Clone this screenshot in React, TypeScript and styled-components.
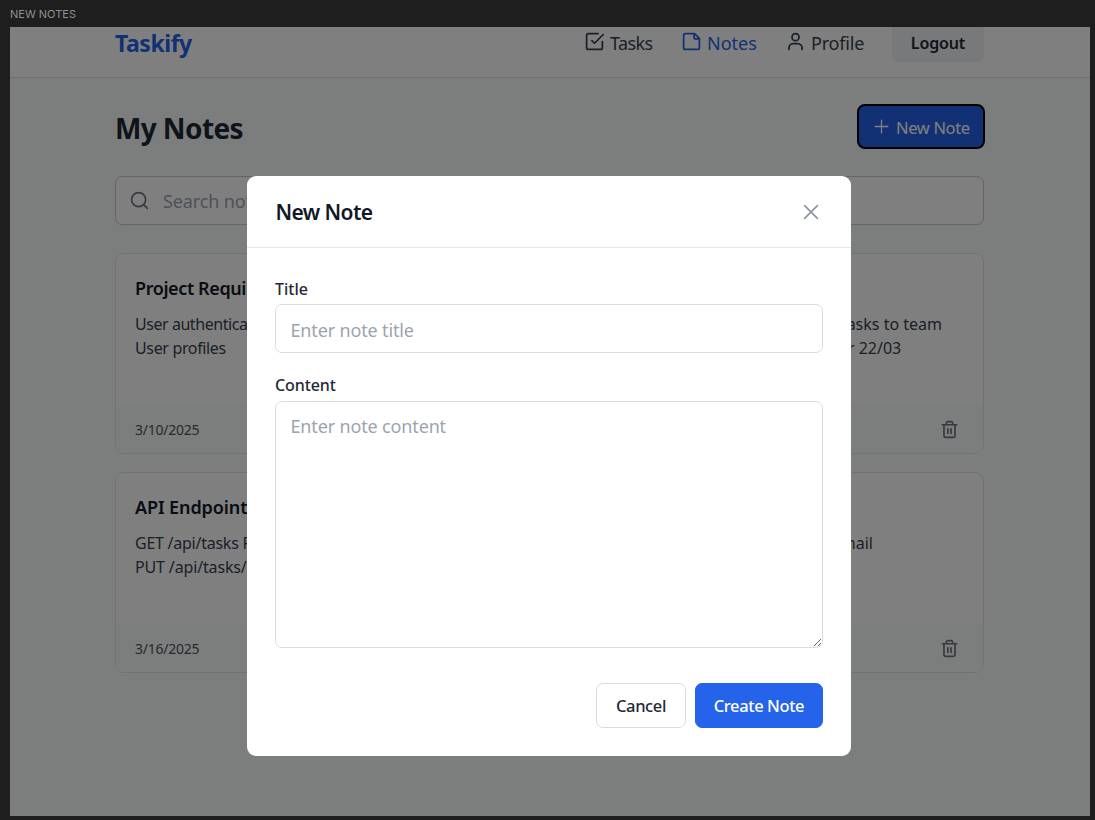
import React from 'react';
import styled, { createGlobalStyle } from 'styled-components';

const Global = createGlobalStyle`
  *, *::before, *::after { box-sizing: border-box; }
  html, body { margin: 0; padding: 0; height: 100%; overflow: hidden; background: #1e1e1e; }
  button, input, textarea { font-family: inherit; margin: 0; }
  h1, h2, h3, p { margin: 0; }
`;

const Board = styled.div`
  width: 1095px;
  height: 820px;
  padding: 0 5px 4px 10px;
  display: flex;
  flex-direction: column;
  background: #1e1e1e;
  font-family: 'Noto Sans', 'Open Sans', sans-serif;
`;

const BoardLabel = styled.div`
  height: 27px;
  line-height: 28px;
  font-family: Inter, sans-serif;
  font-size: 11px;
  color: #8f8f8f;
`;

const Screen = styled.div`
  position: relative;
  flex: 1;
  overflow: hidden;
  background: #f9fcfa;
`;

const Header = styled.header`
  height: 51px;
  padding: 0 106px 0 105px;
  display: flex;
  align-items: flex-start;
  justify-content: space-between;
  background: #fff;
  border-bottom: 1px solid #e3e3e6;
`;

const Text = styled.span<{ $ls?: number }>`
  letter-spacing: ${(p) => p.$ls ?? 0}px;
  white-space: nowrap;
`;

const Brand = styled.div`
  font-size: 23px;
  font-weight: 700;
  line-height: 32px;
  color: #2563eb;
`;

const Nav = styled.nav`
  display: flex;
  align-items: flex-start;
`;

const NavItem = styled.a<{ $active?: boolean; $width: number }>`
  width: ${(p) => p.$width}px;
  height: 32px;
  display: flex;
  align-items: flex-start;
  gap: 5px;
  font-size: 18px;
  line-height: 32px;
  color: ${(p) => (p.$active ? '#2563eb' : '#374151')};
  svg { margin-top: 4px; flex: none; }
`;

const Logout = styled.button`
  width: 92px;
  height: 45px;
  margin-top: -10px;
  padding: 7px 0 0;
  border: 1px solid #eceef1;
  border-radius: 8px;
  background: #f1f2f5;
  font-size: 16px;
  font-weight: 600;
  color: #1f2937;
`;

const Main = styled.main`
  padding: 26px 106px 0 105px;
`;

const TitleRow = styled.div`
  height: 45px;
  margin-bottom: 27px;
  display: flex;
  align-items: center;
  justify-content: space-between;
`;

const PageTitle = styled.h1`
  font-size: 28px;
  line-height: 44px;
  font-weight: 700;
  padding-top: 3px;
  color: #1f2937;
`;

const NewNote = styled.button`
  width: 128px;
  height: 45px;
  margin-right: -1px;
  padding: 0 0 0 14px;
  display: flex;
  align-items: center;
  gap: 6px;
  border: 2px solid #000;
  border-radius: 8px;
  background: #2563eb;
  color: #fff;
  font-size: 16.5px;
  span { padding-top: 1px; }
`;

const Search = styled.div`
  height: 49px;
  margin-bottom: 28px;
  padding-left: 13px;
  display: flex;
  align-items: center;
  gap: 13px;
  border: 1px solid #c7cad1;
  border-radius: 7px;
  background: #fff;
  color: #9ca3af;
  font-size: 18px;
`;

const Cards = styled.div`
  display: flex;
  flex-direction: column;
  gap: 18px;
`;

const Card = styled.article`
  height: 201px;
  display: flex;
  flex-direction: column;
  overflow: hidden;
  border: 1px solid #e2e5e8;
  border-radius: 9px;
  background: #fff;
`;

const CardBody = styled.div`
  flex: 1;
  padding: 20px 19px 0;
`;

const CardTitle = styled.h3`
  font-size: 18px;
  line-height: 28px;
  font-weight: 600;
  color: #111827;
`;

const CardColumns = styled.div<{ $right: number }>`
  margin-top: 10px;
  display: flex;
  justify-content: space-between;
  padding-right: ${(p) => p.$right}px;
  font-size: 16px;
  line-height: 24px;
  color: #374151;
`;

const Column = styled.div<{ $indent?: number }>`
  display: flex;
  flex-direction: column;
  align-items: flex-start;
  span + span { margin-left: ${(p) => p.$indent ?? 0}px; }
`;

const CardFooter = styled.footer`
  height: 48px;
  padding: 0 24px 0 19px;
  display: flex;
  align-items: center;
  justify-content: space-between;
  background: #f9fcfa;
  font-size: 14px;
  color: #4b5563;
`;

const Overlay = styled.div`
  position: absolute;
  inset: 0;
  padding: 149px 0 0 237px;
  background: rgba(0, 0, 0, 0.5);
`;

const Dialog = styled.section`
  width: 604.3px;
  height: 580px;
  display: flex;
  flex-direction: column;
  border-radius: 9px;
  background: #fff;
`;

const DialogHeader = styled.div`
  height: 72px;
  padding: 0 31.5px 0 28.5px;
  display: flex;
  align-items: center;
  justify-content: space-between;
  border-bottom: 1px solid #e5e7eb;
`;

const DialogTitle = styled.h2`
  font-size: 21px;
  line-height: 32px;
  font-weight: 600;
  color: #111827;
`;

const Form = styled.form`
  width: 604px;
  padding: 28px 28px 0;
  display: flex;
  flex-direction: column;
`;

const Label = styled.label<{ $line: number }>`
  height: 28px;
  line-height: ${(p) => p.$line}px;
  font-size: 16px;
  font-weight: 500;
  color: #1f2937;
`;

const fieldStyle = `
  width: 548px;
  border: 1px solid #d9dbe0;
  border-radius: 7px;
  background: #fff;
  font-size: 18px;
  line-height: 26px;
  outline: none;
  &::placeholder { color: #9ca3af; opacity: 1; }
`;

const Input = styled.input<{ $ls: number }>`
  ${fieldStyle}
  height: 49px;
  padding: 2px 14.5px 0;
  margin-bottom: 20px;
  letter-spacing: ${(p) => p.$ls}px;
`;

const TextArea = styled.textarea<{ $ls: number }>`
  ${fieldStyle}
  height: 247px;
  padding: 11px 14.5px;
  resize: vertical;
  letter-spacing: ${(p) => p.$ls}px;
`;

const Actions = styled.div`
  margin-top: 35px;
  display: flex;
  justify-content: flex-end;
  gap: 9px;
`;

const Action = styled.button<{ $primary?: boolean }>`
  width: ${(p) => (p.$primary ? 128 : 90)}px;
  height: 45px;
  padding: 0;
  border: 1px solid ${(p) => (p.$primary ? '#2563eb' : '#d9dbe0')};
  border-radius: 7px;
  background: ${(p) => (p.$primary ? '#2563eb' : '#fff')};
  color: ${(p) => (p.$primary ? '#fff' : '#1f2937')};
  font-size: 16.5px;
  font-weight: 500;
`;

const Icon = ({ size, width = 2, color = 'currentColor', children }: { size: number; width?: number; color?: string; children: React.ReactNode }) => (
  <svg width={size} height={size} viewBox="0 0 24 24" fill="none" stroke={color} strokeWidth={width} strokeLinecap="round" strokeLinejoin="round">
    {children}
  </svg>
);

const Trash = () => (
  <Icon size={19} width={2.1} color="#6b7280">
    <path d="M3 6h18M19 6v14a2 2 0 0 1-2 2H7a2 2 0 0 1-2-2V6M8 6V4a2 2 0 0 1 2-2h4a2 2 0 0 1 2 2v2M10 11v6M14 11v6" />
  </Icon>
);

export default function App() {
  return (
    <Board>
      <Global />
      <BoardLabel><Text>NEW NOTES</Text></BoardLabel>
      <Screen>
        <Header>
          <Brand><Text $ls={-0.45}>Taskify</Text></Brand>
          <Nav>
            <NavItem $width={97}>
              <Icon size={21}><path d="m9 11 3 3L22 4M21 12v7a2 2 0 0 1-2 2H5a2 2 0 0 1-2-2V5a2 2 0 0 1 2-2h11" /></Icon>
              <Text $ls={-0.6}>Tasks</Text>
            </NavItem>
            <NavItem $width={104} $active>
              <Icon size={21}><path d="M15.500 3H5a2 2 0 0 0-2 2v14a2 2 0 0 0 2 2h14a2 2 0 0 0 2-2V8.500zM15 3v5a1 1 0 0 0 1 1h5" /></Icon>
              <Text>Notes</Text>
            </NavItem>
            <NavItem $width={107}>
              <Icon size={21}><path d="M4.500 21v-1.500a5 5 0 0 1 5-5h5a5 5 0 0 1 5 5V21" /><circle cx="12" cy="7" r="4" /></Icon>
              <Text $ls={-0.2}>Profile</Text>
            </NavItem>
            <Logout type="button"><Text $ls={-0.15}>Logout</Text></Logout>
          </Nav>
        </Header>
        <Main>
          <TitleRow>
            <PageTitle><Text $ls={-0.6}>My Notes</Text></PageTitle>
            <NewNote type="button">
              <Icon size={17} width={1.8}><path d="M3 12h18M12 3v18" /></Icon>
              <Text $ls={-0.35}>New Note</Text>
            </NewNote>
          </TitleRow>
          <Search>
            <Icon size={21} width={1.8} color="#6b7280"><circle cx="11" cy="11" r="8" /><path d="m21 21-4.300-4.300" /></Icon>
            <Text $ls={-0.12}>Search notes...</Text>
          </Search>
          <Cards>
            <Card>
              <CardBody>
                <CardTitle><Text $ls={-0.4}>Project Requirements</Text></CardTitle>
                <CardColumns $right={22}>
                  <Column><Text $ls={-0.45}>User authentication</Text><Text $ls={-0.35}>User profiles</Text></Column>
                  <Column $indent={-25}><Text>Assign tasks to team</Text><Text>Review after 22/03</Text></Column>
                </CardColumns>
              </CardBody>
              <CardFooter><Text $ls={-0.25}>3/10/2025</Text><Trash /></CardFooter>
            </Card>
            <Card>
              <CardBody>
                <CardTitle><Text $ls={-0.1}>API Endpoints</Text></CardTitle>
                <CardColumns $right={91}>
                  <Column><Text $ls={-0.25}>GET /api/tasks POST</Text><Text $ls={-0.15}>PUT /api/tasks/:id</Text></Column>
                  <Column><Text>Send email</Text></Column>
                </CardColumns>
              </CardBody>
              <CardFooter><Text $ls={-0.25}>3/16/2025</Text><Trash /></CardFooter>
            </Card>
          </Cards>
        </Main>
        <Overlay>
          <Dialog>
            <DialogHeader>
              <DialogTitle><Text $ls={-0.6}>New Note</Text></DialogTitle>
              <Icon size={18} width={2.2} color="#8d95a3"><path d="M3.500 3.500l17 17M20.500 3.500l-17 17" /></Icon>
            </DialogHeader>
            <Form>
              <Label $line={26}><Text>Title</Text></Label>
              <Input placeholder="Enter note title" $ls={-0.15} />
              <Label $line={25}><Text $ls={-0.1}>Content</Text></Label>
              <TextArea placeholder="Enter note content" $ls={-0.15} />
              <Actions>
                <Action type="button"><Text $ls={-0.4}>Cancel</Text></Action>
                <Action type="button" $primary><Text $ls={-0.4}>Create Note</Text></Action>
              </Actions>
            </Form>
          </Dialog>
        </Overlay>
      </Screen>
    </Board>
  );
}
